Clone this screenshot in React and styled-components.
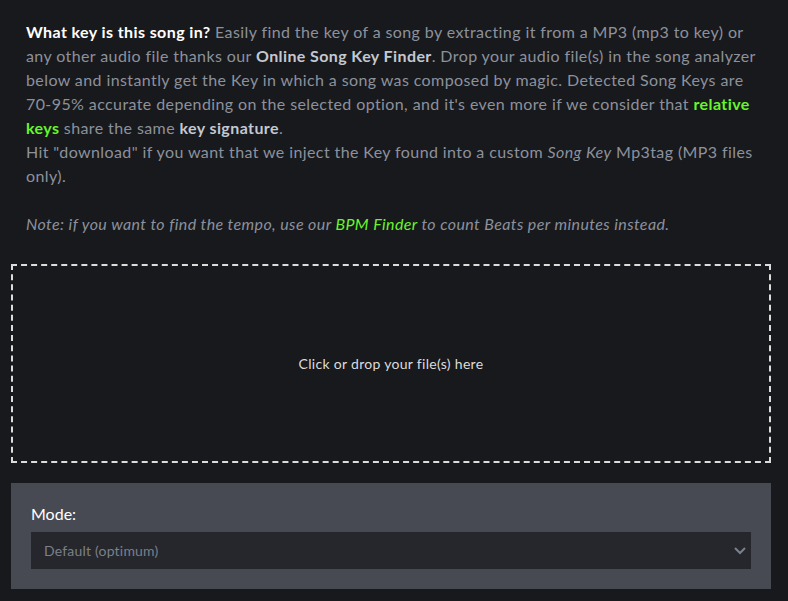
import React from "react";
import styled, { createGlobalStyle } from "styled-components";

const Global = createGlobalStyle`
  html, body { margin: 0; padding: 0; background: #18191d; }
  body { font-family: Lato, "Open Sans", sans-serif; }
`;

const Page = styled.div`
  width: 760px;
  margin-left: 11px;
  padding-top: 20px;
  padding-bottom: 12px;
`;

const Intro = styled.div`
  padding: 0 14px 0 15px;
  color: #8c919c;
  font-size: 16px;
  line-height: 24px;
  letter-spacing: 0.4px;
`;

const Para = styled.p`
  margin: 0 0 ${(p) => p.$gap || 0}px;
  font-style: ${(p) => (p.$italic ? "italic" : "normal")};
`;

const Lead = styled.strong`
  color: #ffffff;
  font-weight: 700;
`;

const Strong = styled.strong`
  color: #c4c8d0;
  font-weight: 700;
`;

const Green = styled.a`
  color: #67f52c;
  text-decoration: none;
  font-weight: ${(p) => (p.$bold ? 700 : "inherit")};
`;

const DropZone = styled.div`
  margin-top: 28px;
  height: 195px;
  border: 2px dashed #dcdcdc;
  display: flex;
  align-items: center;
  justify-content: center;
  color: #dcdcdc;
  font-size: 14px;
  letter-spacing: 0.3px;
  cursor: pointer;
`;

const Panel = styled.div`
  margin-top: 20px;
  background: #474a52;
  padding: 19px 20px 20px 20px;
`;

const Label = styled.label`
  display: block;
  color: #ffffff;
  font-size: 16px;
  line-height: 24px;
  margin-bottom: 6px;
`;

const SelectBox = styled.div`
  position: relative;
  height: 37px;
  background: #25272c;
  display: flex;
  align-items: center;
  padding-left: 13px;
  color: #7b808a;
  font-size: 14px;
  letter-spacing: 0.2px;
`;

const Chevron = styled.svg`
  position: absolute;
  right: 3px;
  top: 13px;
`;

export default function App() {
  return (
    <>
      <Global />
      <Page>
        <Intro>
          <Para>
            <Lead>What key is this song in?</Lead> Easily find the key of a song by
            extracting it from a MP3 (mp3 to key) or any other audio file thanks our{" "}
            <Strong>Online Song Key Finder</Strong>. Drop your audio file(s) in the song
            analyzer below and instantly get the Key in which a song was composed by
            magic. Detected Song Keys are 70-95% accurate depending on the selected
            option, and it's even more if we consider that{" "}
            <Green $bold>relative keys</Green> share the same{" "}
            <Strong>key signature</Strong>.
          </Para>
          <Para $gap={24}>
            Hit "download" if you want that we inject the Key found into a custom{" "}
            <em>Song Key</em> Mp3tag (MP3 files only).
          </Para>
          <Para $italic>
            Note: if you want to find the tempo, use our <Green>BPM Finder</Green> to
            count Beats per minutes instead.
          </Para>
        </Intro>
        <DropZone>Click or drop your file(s) here</DropZone>
        <Panel>
          <Label>Mode:</Label>
          <SelectBox>
            Default (optimum)
            <Chevron width="16" height="12" viewBox="0 0 16 12">
              <path d="M3 3 L8 8 L13 3" fill="none" stroke="#7b808a" strokeWidth="2" />
            </Chevron>
          </SelectBox>
        </Panel>
      </Page>
    </>
  );
}
